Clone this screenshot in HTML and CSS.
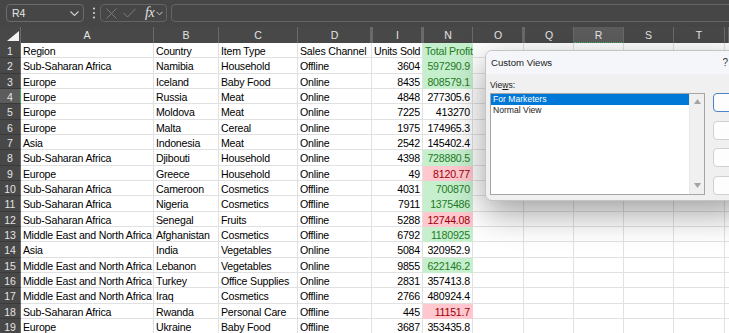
FILE: index.html
```html
<!DOCTYPE html>
<html>
<head>
<meta charset="utf-8">
<link rel="stylesheet" href="styles.css">
</head>
<body>
<div class="topbar">
  <div class="namebox"><span>R4</span><svg class="chev" width="9" height="6" viewBox="0 0 9 6"><polyline points="0.5,0.5 4.5,4.5 8.5,0.5" fill="none" stroke="#cfcfcf" stroke-width="1.1"/></svg></div>
  <svg class="kebab" width="6" height="14" viewBox="0 0 6 14"><circle cx="3" cy="2.5" r="1.1" fill="#cfcfcf"/><circle cx="3" cy="7" r="1.1" fill="#cfcfcf"/><circle cx="3" cy="11.5" r="1.1" fill="#cfcfcf"/></svg>
  <div class="fxbox">
    <svg width="11" height="11" viewBox="0 0 11 11"><path d="M0.5,0.5 L10.5,10.5 M10.5,0.5 L0.5,10.5" stroke="#7d7d7d" stroke-width="1"/></svg>
    <svg width="13" height="10" viewBox="0 0 13 10"><polyline points="0.5,5 4.5,9 12.5,0.8" fill="none" stroke="#7d7d7d" stroke-width="1"/></svg>
    <span class="fx">fx</span>
    <svg width="7" height="5" viewBox="0 0 7 5"><polyline points="0.5,0.8 3.5,3.8 6.5,0.8" fill="none" stroke="#cfcfcf" stroke-width="1"/></svg>
  </div>
  <div class="formula"></div>
</div>

<div class="sheet">
  <div class="row hdr">
    <div class="corner"><svg width="12" height="10" viewBox="0 0 12 10"><polygon points="0,10 12,10 12,0" fill="#f2f2f2"/></svg></div>
    <div class="h">A</div><div class="h">B</div><div class="h">C</div><div class="h">D</div><div class="h dbl">I</div><div class="h dbl">N</div><div class="h">O</div><div class="h dbl">Q</div><div class="h sel">R</div><div class="h">S</div><div class="h">T</div><div class="h"></div>
  </div>
  <div class="row"><div class="rh">1</div><div class="c">Region</div><div class="c">Country</div><div class="c">Item Type</div><div class="c">Sales Channel</div><div class="c">Units Sold</div><div class="c g">Total Profit</div><i></i><i></i><i></i><i></i><i></i><i></i></div>
  <div class="row tall"><div class="rh">2</div><div class="c">Sub-Saharan Africa</div><div class="c">Namibia</div><div class="c">Household</div><div class="c">Offline</div><div class="c n">3604</div><div class="c n g">597290.9</div><i></i><i></i><i></i><i></i><i></i><i></i></div>
  <div class="row"><div class="rh">3</div><div class="c">Europe</div><div class="c">Iceland</div><div class="c">Baby Food</div><div class="c">Online</div><div class="c n">8435</div><div class="c n g">808579.1</div><i></i><i></i><i></i><i></i><i></i><i></i></div>
  <div class="row"><div class="rh act">4</div><div class="c">Europe</div><div class="c">Russia</div><div class="c">Meat</div><div class="c">Online</div><div class="c n">4848</div><div class="c n">277305.6</div><i></i><i></i><i></i><i></i><i></i><i></i></div>
  <div class="row tall"><div class="rh">5</div><div class="c">Europe</div><div class="c">Moldova</div><div class="c">Meat</div><div class="c">Online</div><div class="c n">7225</div><div class="c n">413270</div><i></i><i></i><i></i><i></i><i></i><i></i></div>
  <div class="row"><div class="rh">6</div><div class="c">Europe</div><div class="c">Malta</div><div class="c">Cereal</div><div class="c">Online</div><div class="c n">1975</div><div class="c n">174965.3</div><i></i><i></i><i></i><i></i><i></i><i></i></div>
  <div class="row"><div class="rh">7</div><div class="c">Asia</div><div class="c">Indonesia</div><div class="c">Meat</div><div class="c">Online</div><div class="c n">2542</div><div class="c n">145402.4</div><i></i><i></i><i></i><i></i><i></i><i></i></div>
  <div class="row tall"><div class="rh">8</div><div class="c">Sub-Saharan Africa</div><div class="c">Djibouti</div><div class="c">Household</div><div class="c">Online</div><div class="c n">4398</div><div class="c n g">728880.5</div><i></i><i></i><i></i><i></i><i></i><i></i></div>
  <div class="row"><div class="rh">9</div><div class="c">Europe</div><div class="c">Greece</div><div class="c">Household</div><div class="c">Online</div><div class="c n">49</div><div class="c n rd">8120.77</div><i></i><i></i><i></i><i></i><i></i><i></i></div>
  <div class="row"><div class="rh">10</div><div class="c">Sub-Saharan Africa</div><div class="c">Cameroon</div><div class="c">Cosmetics</div><div class="c">Offline</div><div class="c n">4031</div><div class="c n g">700870</div><i></i><i></i><i></i><i></i><i></i><i></i></div>
  <div class="row tall"><div class="rh">11</div><div class="c">Sub-Saharan Africa</div><div class="c">Nigeria</div><div class="c">Cosmetics</div><div class="c">Offline</div><div class="c n">7911</div><div class="c n g">1375486</div><i></i><i></i><i></i><i></i><i></i><i></i></div>
  <div class="row"><div class="rh">12</div><div class="c">Sub-Saharan Africa</div><div class="c">Senegal</div><div class="c">Fruits</div><div class="c">Offline</div><div class="c n">5288</div><div class="c n rd">12744.08</div><i></i><i></i><i></i><i></i><i></i><i></i></div>
  <div class="row"><div class="rh">13</div><div class="c">Middle East and North Africa</div><div class="c">Afghanistan</div><div class="c">Cosmetics</div><div class="c">Offline</div><div class="c n">6792</div><div class="c n g">1180925</div><i></i><i></i><i></i><i></i><i></i><i></i></div>
  <div class="row tall"><div class="rh">14</div><div class="c">Asia</div><div class="c">India</div><div class="c">Vegetables</div><div class="c">Online</div><div class="c n">5084</div><div class="c n">320952.9</div><i></i><i></i><i></i><i></i><i></i><i></i></div>
  <div class="row"><div class="rh">15</div><div class="c">Middle East and North Africa</div><div class="c">Lebanon</div><div class="c">Vegetables</div><div class="c">Online</div><div class="c n">9855</div><div class="c n g">622146.2</div><i></i><i></i><i></i><i></i><i></i><i></i></div>
  <div class="row"><div class="rh">16</div><div class="c">Middle East and North Africa</div><div class="c">Turkey</div><div class="c">Office Supplies</div><div class="c">Online</div><div class="c n">2831</div><div class="c n">357413.8</div><i></i><i></i><i></i><i></i><i></i><i></i></div>
  <div class="row tall"><div class="rh">17</div><div class="c">Middle East and North Africa</div><div class="c">Iraq</div><div class="c">Cosmetics</div><div class="c">Offline</div><div class="c n">2766</div><div class="c n">480924.4</div><i></i><i></i><i></i><i></i><i></i><i></i></div>
  <div class="row"><div class="rh">18</div><div class="c">Sub-Saharan Africa</div><div class="c">Rwanda</div><div class="c">Personal Care</div><div class="c">Offline</div><div class="c n">445</div><div class="c n rd">11151.7</div><i></i><i></i><i></i><i></i><i></i><i></i></div>
  <div class="row"><div class="rh">19</div><div class="c">Europe</div><div class="c">Ukraine</div><div class="c">Baby Food</div><div class="c">Offline</div><div class="c n">3687</div><div class="c n">353435.8</div><i></i><i></i><i></i><i></i><i></i><i></i></div>
</div>

<div class="dialog">
  <div class="dtitle"><span>Custom Views</span><span class="help">?</span></div>
  <div class="dbody">
    <div class="lbl">Vie<u>w</u>s:</div>
    <div></div>
    <div class="listbox">
      <div class="items">
        <div class="item selitem">For Marketers</div>
        <div class="item">Normal View</div>
      </div>
      <div class="vscroll">
        <svg width="7" height="5" viewBox="0 0 7 5"><polygon points="0,5 7,5 3.5,0" fill="#a4a4a4"/></svg>
        <svg width="7" height="5" viewBox="0 0 7 5"><polygon points="0,0 7,0 3.5,5" fill="#a4a4a4"/></svg>
      </div>
    </div>
    <div class="btns">
      <div class="btn def"></div>
      <div class="btn"></div>
      <div class="btn"></div>
      <div class="btn"></div>
    </div>
  </div>
</div>
</body>
</html>
```
FILE: styles.css
```css
html, body {
  margin: 0;
  padding: 0;
  overflow: hidden;
  width: 729px;
  height: 333px;
}
body {
  background: #464646;
  font-family: "Liberation Sans", Arial, sans-serif;
  position: relative;
}
.topbar {
  height: 27px;
  box-sizing: border-box;
  padding: 4px 0 0 6px;
  display: flex;
  align-items: flex-start;
}
.namebox {
  width: 78px;
  height: 18px;
  box-sizing: border-box;
  border: 1px solid #6c6c6c;
  border-radius: 4px;
  display: flex;
  align-items: center;
  justify-content: space-between;
  padding: 0 4px 0 5px;
  color: #e6e6e6;
  font-size: 10.5px;
}
.chev { margin-top: 1px; }
.kebab { margin: 2px 3px 0 7px; }
.fxbox {
  width: 67px;
  height: 18px;
  box-sizing: border-box;
  border: 1px solid #646464;
  border-radius: 4px;
  display: flex;
  align-items: center;
  padding-left: 5px;
  gap: 5px;
}
.fxbox svg:nth-child(2) { margin-left: 1px; }
.fx {
  font-family: "Liberation Serif", serif;
  font-style: italic;
  font-size: 14px;
  color: #e2e2e2;
  margin-left: 4px;
  margin-right: -3px;
  letter-spacing: -0.5px;
}
.formula {
  flex: 1;
  height: 18px;
  margin-left: 4px;
  margin-right: -10px;
  box-sizing: border-box;
  border: 1px solid #646464;
  border-radius: 4px;
}
.sheet {
  display: flex;
  flex-direction: column;
}
.row {
  display: grid;
  grid-template-columns: 21px 133px 65px 79px 74px 51px 50px 51px 50px 50px 50px 51px 1fr;
  grid-template-rows: 100%;
  height: 15px;
  background: #ffffff;
  font-size: 10.6px;
  letter-spacing: -0.2px;
  color: #000;
}
.row.tall { height: 16px; }
.row.hdr {
  height: 16px;
  background: #484848;
  letter-spacing: 0;
}
.corner {
  display: flex;
  align-items: flex-end;
  justify-content: flex-end;
  padding: 0 1px 2px 0;
  border-right: 1px solid #6a6a6a;
}
.h {
  color: #e4e4e4;
  text-align: center;
  line-height: 17px;
  font-size: 10.5px;
  border-right: 1px solid #6a6a6a;
  box-sizing: border-box;
}
.h.dbl { border-left: 3px double #6a6a6a; margin-left: -2px; }
.h.sel {
  background: #5c5c5c;
  border-bottom: 1px dotted #3fae5e;
}
.rh {
  background: #484848;
  color: #e4e4e4;
  text-align: center;
  padding-top: 2px;
  line-height: 12px;
  border-bottom: 1px solid #3a3a3a;
  border-right: 1px solid #6a6a6a;
  box-sizing: border-box;
  font-size: 10.5px;
  letter-spacing: 0;
  overflow: hidden;
}
.rh.act {
  background: #5c5c5c;
  border-right: 1px solid #3fae5e;
}
.c, .row i {
  border-right: 1px solid #e1e1e1;
  border-bottom: 1px solid #e1e1e1;
  box-sizing: border-box;
  padding: 2px 2px 0;
  line-height: 12px;
  min-height: 0;
  white-space: nowrap;
  overflow: visible;
}
.row .c:nth-child(2) { position: relative; z-index: 1; }
.c.n { text-align: right; }
.c.g {
  background: #c6efce;
  color: #1e7b1e;
  border-color: #c6efce;
}
.c.rd {
  background: #ffc7ce;
  color: #9c0006;
  border-color: #ffc7ce;
}
.dialog {
  position: absolute;
  left: 485px;
  top: 50px;
  width: 262px;
  height: 151px;
  box-sizing: border-box;
  border: 1px solid #c4c4c4;
  border-radius: 7px;
  background: #f0f0f0;
  box-shadow: 0 12px 34px rgba(0, 0, 0, 0.38);
  overflow: hidden;
  color: #1a1a1a;
}
.dtitle {
  height: 23px;
  background: #f4f6f9;
  display: flex;
  align-items: center;
  padding: 0 0 0 5px;
  font-size: 9.6px;
}
.help {
  margin-left: auto;
  margin-right: 18px;
  font-size: 10px;
  color: #333;
}
.dbody {
  display: grid;
  grid-template-columns: 215px 1fr;
  column-gap: 8px;
  padding: 6px 0 0 4px;
}
.lbl {
  font-size: 8.6px;
  height: 13px;
  line-height: 11px;
}
.listbox {
  height: 102px;
  box-sizing: border-box;
  border: 1px solid #a5a5a5;
  background: #ffffff;
  display: flex;
}
.items {
  flex: 1;
  padding-top: 0;
}
.item {
  height: 11px;
  line-height: 11px;
  font-size: 8.6px;
  padding-left: 2px;
}
.selitem {
  background: #0078d7;
  color: #ffffff;
}
.vscroll {
  width: 14px;
  background: #f0f0f0;
  border-left: 1px solid #e8e8e8;
  display: flex;
  flex-direction: column;
  align-items: center;
  justify-content: space-between;
  padding: 5px 0 6px;
}
.btns {
  display: flex;
  flex-direction: column;
  gap: 8.5px;
}
.btn {
  height: 19px;
  box-sizing: border-box;
  border: 1px solid #d0d0d0;
  border-radius: 4px;
  background: #fdfdfd;
}
.btn.def {
  border: 1px solid #4b84c8;
}
```
